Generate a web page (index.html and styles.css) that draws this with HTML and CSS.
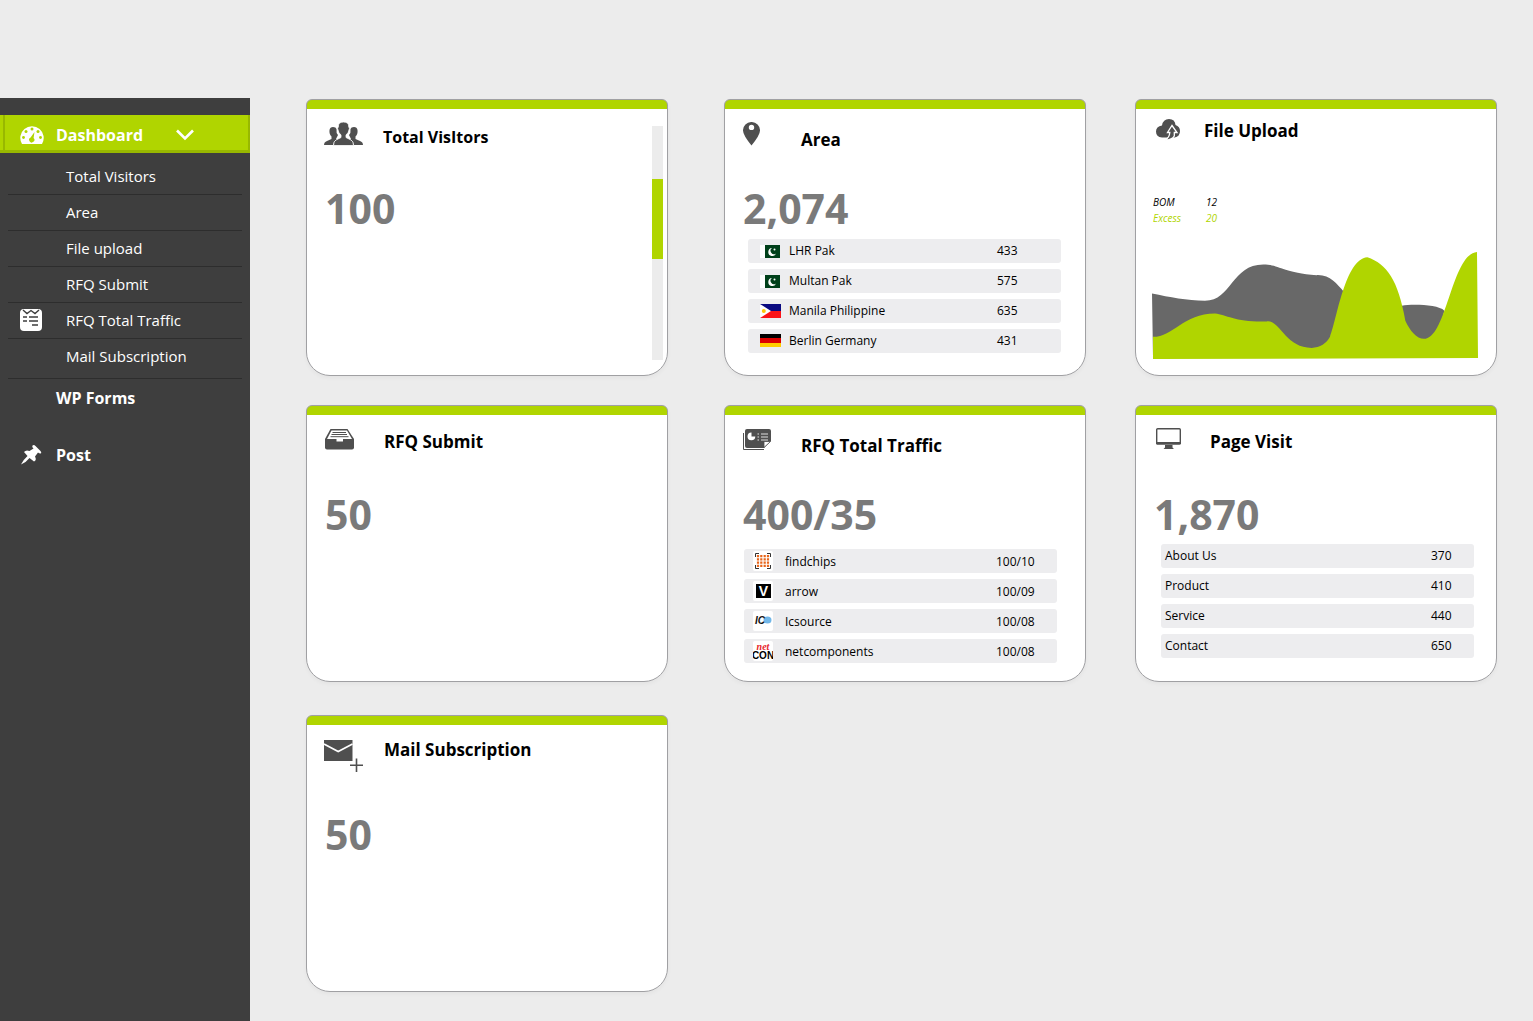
FILE: index.html
```html
<!DOCTYPE html>
<html lang="en">
<head>
<meta charset="utf-8">
<meta name="viewport" content="width=device-width, initial-scale=1">
<title>Dashboard</title>
<link rel="stylesheet" href="styles.css">
</head>
<body>
<div class="layout">
  <nav class="sidebar" aria-label="Main menu">
    <a class="nav-main nav-main--active" href="#dashboard">
      <svg class="nav-icon" width="24" height="20" viewBox="0 0 24 20" aria-hidden="true">
        <path fill="#fff" d="M2 19A11.700 11.700 0 1 1 22 19Z"/>
        <g fill="#b0d500"><circle cx="3.500" cy="12.500" r="1.400"/><circle cx="6" cy="6.500" r="1.500"/><circle cx="12" cy="4" r="1.500"/><circle cx="18" cy="6.500" r="1.500"/><circle cx="20.500" cy="12.500" r="1.400"/><path d="M14.500 7L13.600 13A2.600 2.600 0 1 1 10.600 12.500Z"/></g>
      </svg>
      <span class="nav-label">Dashboard</span>
      <svg class="nav-chevron" width="18" height="12" viewBox="0 0 18 12" aria-hidden="true"><path d="M1 1.500L9 9.500L17 1.500" fill="none" stroke="#fff" stroke-width="2.600"/></svg>
    </a>
    <ul class="submenu">
      <li><a href="#visitors">Total Visitors</a></li>
      <li><a href="#area">Area</a></li>
      <li><a href="#upload">File upload</a></li>
      <li><a href="#submit">RFQ Submit</a></li>
      <li class="submenu-marked">
        <svg width="22" height="22" viewBox="0 0 22 22" aria-hidden="true">
          <rect width="22" height="22" rx="4" fill="#fff"/>
          <path d="M3 1L7 4.500L11 1.500L15 4.500L19 1M3 8H7M9 8H18M3 12H7M9 12H18M12 16H18" fill="none" stroke="#3e3e3e" stroke-width="1.400"/>
        </svg>
        <a href="#traffic">RFQ Total Traffic</a>
      </li>
      <li><a href="#mail">Mail Subscription</a></li>
    </ul>
    <a class="nav-main" href="#forms"><span class="nav-label">WP Forms</span></a>
    <a class="nav-main nav-main--post" href="#post">
      <svg class="nav-icon" width="24" height="22" viewBox="0 0 24 22" aria-hidden="true">
        <path fill="#fff" d="M12.500 1.500Q14 .5 15.500 2L20.500 7Q22 9 20.500 9.500Q19 9.500 18 8.500L15 12.500Q17 16 14 17.500L9.500 14Q6 18.500 1 20.500Q3 16 7.500 12L4 8Q6 5.500 9.500 7L13.500 4.500Q11.500 3 12.500 1.500Z"/>
      </svg>
      <span class="nav-label">Post</span>
    </a>
  </nav>

  <main class="cards">
    <section class="card card--first card--scroll" id="visitors">
      <div>
        <header class="card-head card-head--small">
          <svg width="39" height="24" viewBox="0 0 39 24" fill="#4f4f4f" aria-hidden="true">
            <path d="M0 23Q0 20 3 19L7.500 17V14.500Q5 12 5.500 8Q6 5 9 5Q12 5 12.500 7Q12 11 14 13L12 17Q14 17.500 11.500 18.500Q9.500 20 9 23Z"/>
            <path d="M39 23Q39 20 36 19L31.500 17V14.500Q34 12 33.500 8Q33 5 30 5Q27 5 26.500 7Q27 11 25 13L27 17Q25 17.500 27.500 18.500Q29.500 20 30 23Z"/>
            <path stroke="#fff" stroke-width=".8" d="M9.500 23.500Q9.500 19 12 18L17 15.500V13Q14.500 11 14 8Q13 6 14.300 5Q14 0 19.500 0Q25 0 24.800 5Q26 6 25 8Q24.500 11 22 13V15.500L27 18Q29.500 19 29.500 23.500Z"/>
          </svg>
          <h2>Total VisItors</h2>
        </header>
        <p class="stat">100</p>
      </div>
      <div class="track"><div class="thumb"></div></div>
    </section>

    <section class="card card--middle" id="area">
      <header class="card-head card-head--low">
        <svg width="17" height="24" viewBox="0 0 17 24" aria-hidden="true"><path fill="#4f4f4f" fill-rule="evenodd" d="M8.500 0A8.300 8.300 0 0 1 17 8.500Q17 13 8.500 23.500Q0 13 0 8.500A8.300 8.300 0 0 1 8.500 0ZM8.500 2.700A2.700 2.700 0 1 0 8.500 8.100A2.700 2.700 0 1 0 8.500 2.700Z"/></svg>
        <h2>Area</h2>
      </header>
      <p class="stat">2,074</p>
      <ul class="rows rows--area">
        <li><svg width="21" height="14" viewBox="0 0 21 14" aria-hidden="true"><path fill="#fff" d="M0 1H5V14H0Z"/><path fill="#00401a" d="M5 1H20V14H5Z"/><path fill="#fff" d="M12 4A4 4 0 1 0 16 9.500A3.300 3.300 0 1 1 12 4Z"/><circle cx="14.500" cy="5.500" r="1" fill="#fff"/></svg><span>LHR Pak</span><b>433</b></li>
        <li><svg width="21" height="14" viewBox="0 0 21 14" aria-hidden="true"><path fill="#fff" d="M0 1H5V14H0Z"/><path fill="#00401a" d="M5 1H20V14H5Z"/><path fill="#fff" d="M12 4A4 4 0 1 0 16 9.500A3.300 3.300 0 1 1 12 4Z"/><circle cx="14.500" cy="5.500" r="1" fill="#fff"/></svg><span>Multan Pak</span><b>575</b></li>
        <li><svg width="21" height="14" viewBox="0 0 21 14" aria-hidden="true"><path fill="#0a0a80" d="M0 0H21V7H0Z"/><path fill="#fb1318" d="M0 7H21V14H0Z"/><path fill="#fff" d="M0 0L11 7L0 14Z"/><circle cx="3.800" cy="7" r="2" fill="#fcc80c"/></svg><span>Manila Philippine</span><b>635</b></li>
        <li><svg width="21" height="14" viewBox="0 0 21 14" aria-hidden="true"><path d="M0 0H21V5H0Z"/><path fill="#dd0000" d="M0 4H21V9H0Z"/><path fill="#ffce00" d="M0 9H21V13H0Z"/></svg><span>Berlin Germany</span><b>431</b></li>
      </ul>
    </section>

    <section class="card card--last" id="upload">
      <header class="card-head card-head--high">
        <svg width="25" height="22" viewBox="0 0 25 22" aria-hidden="true">
          <path fill="#4f4f4f" d="M6 18.500Q0 18 0 12.500Q0 7.500 6 6.500Q7 0 13 0Q19 0 19.500 6Q24 7.500 24 12Q24 17.500 18.500 18.500Z"/>
          <path fill="#4f4f4f" stroke="#fff" stroke-width="1.300" d="M16 6.500L21 13.500H18.300V17Q16.500 20.500 9 21.300Q13.500 18.500 13.800 13.500H11.500Z"/>
        </svg>
        <h2>File Upload</h2>
      </header>
      <dl class="legend">
        <dt>BOM</dt><dd>12</dd>
        <dt class="legend-excess">Excess</dt><dd class="legend-excess">20</dd>
      </dl>
      <svg class="chart" viewBox="66 485 978 319" preserveAspectRatio="none" role="img" aria-label="BOM and Excess uploads over time">
        <path fill="#686868" d="M66 609C120 620 170 630 225 630C305 630 305 522 400 522C450 522 450 545 560 554C600 552 620 580 642 604L640 790L69 800Z"/>
        <path fill="#686868" d="M815 645C850 640 925 642 943 660L920 780H830Z"/>
        <path fill="#b0d500" d="M69 738C130 738 160 668 255 668C290 672 320 695 410 692C450 686 465 771 545 771C570 771 590 757 600 738C620 690 645 505 712 501C770 520 805 570 826 690C840 720 860 744 882 744C950 744 965 490 1041 485L1044 801L69 804Z"/>
      </svg>
    </section>

    <section class="card card--first" id="submit">
      <header class="card-head">
        <svg width="30" height="22" viewBox="0 -1 30 22" aria-hidden="true">
          <path fill="#4f4f4f" d="M6.500 0H23.500L30 10V18.500Q30 20.500 28 20.500H3Q1 20.500 1 18.500V10Z"/>
          <path fill="#fff" d="M7.500 1.500H23L28 10H19V12.500H12.500V10H3Z"/>
          <path d="M8.500 3.500H22M7.500 5.500H23M6.500 7.700H24.500" stroke="#4f4f4f"/>
        </svg>
        <h2>RFQ Submit</h2>
      </header>
      <p class="stat">50</p>
    </section>

    <section class="card card--middle" id="traffic">
      <header class="card-head card-head--low">
        <svg width="28" height="23" viewBox="0 -1 28 23" aria-hidden="true">
          <path d="M.5 4V20.500H21" fill="none" stroke="#4f4f4f"/>
          <path fill="#4f4f4f" d="M4 0H26Q28 0 28 2V12L21 19H4Q2 19 2 17V2Q2 0 4 0Z"/>
          <path fill="#fff" stroke="#4f4f4f" stroke-width=".8" d="M21 18.500V12.500H27.500Z"/>
          <path fill="#fff" d="M8.500 3.500V7.500H12.300A3.900 3.900 0 1 1 8.500 3.500Z"/>
          <path d="M14.500 5H16M18 5H25M14.500 8H16M18 8H25M14.500 11H16M18 11H25" stroke="#ddd" stroke-width="1.200"/>
        </svg>
        <h2>RFQ Total Traffic</h2>
      </header>
      <p class="stat">400/35</p>
      <ul class="rows rows--traffic">
        <li><svg width="20" height="20" viewBox="0 0 20 20" aria-hidden="true"><rect width="20" height="20" rx="2" fill="#fff"/><path d="M2.500 6V2.500H6M14 2.500H17.500V6M17.500 14V17.500H14M6 17.500H2.500V14" fill="none" stroke="#333"/><path d="M5 4V16M8.300 4V16M11.700 4V16M15 4V16" stroke="#e8651a" stroke-width="2.200" stroke-dasharray="2.200 1.070"/></svg><span>findchips</span><b>100/10</b></li>
        <li><svg width="20" height="20" viewBox="0 0 20 20" aria-hidden="true"><rect width="20" height="20" rx="2" fill="#fff"/><path d="M3 3H18V17H3Z"/><text x="10.500" y="15" text-anchor="middle" class="logo-v">V</text></svg><span>arrow</span><b>100/09</b></li>
        <li><svg width="20" height="20" viewBox="0 0 20 20" aria-hidden="true"><rect width="20" height="20" rx="2" fill="#fff"/><ellipse cx="14.500" cy="9" rx="4" ry="3.500" fill="#72b7e8"/><text x="2" y="13" class="logo-ic">IC</text></svg><span>Icsource</span><b>100/08</b></li>
        <li><svg width="20" height="20" viewBox="0 0 20 20" aria-hidden="true"><rect width="20" height="20" rx="2" fill="#fff"/><text x="10" y="9" text-anchor="middle" class="logo-net">net</text><text x="10" y="18" text-anchor="middle" class="logo-con">CON</text></svg><span>netcomponents</span><b>100/08</b></li>
      </ul>
    </section>

    <section class="card card--last" id="pages">
      <header class="card-head card-head--wide">
        <svg width="25" height="22" viewBox="0 0 25 22" aria-hidden="true">
          <rect x=".7" y=".7" width="23.600" height="15" rx="1" fill="#fff" stroke="#4f4f4f" stroke-width="1.400"/>
          <path fill="#4f4f4f" d="M0 14H25V15.500Q25 16.500 24 16.500H1Q0 16.500 0 15.500ZM9 17H16.500V19.500L18 21H7.500L9 19.500Z"/>
        </svg>
        <h2>Page Visit</h2>
      </header>
      <p class="stat">1,870</p>
      <ul class="rows rows--pages">
        <li><span>About Us</span><b>370</b></li>
        <li><span>Product</span><b>410</b></li>
        <li><span>Service</span><b>440</b></li>
        <li><span>Contact</span><b>650</b></li>
      </ul>
    </section>

    <section class="card card--first card--mail" id="mail">
      <header class="card-head card-head--mail">
        <svg width="40" height="35" viewBox="0 -1 40 35" aria-hidden="true">
          <path fill="#4f4f4f" d="M0 1H28.500V22H0Z"/>
          <path d="M0 5L14.200 12.500L28.500 5" fill="none" stroke="#fff" stroke-width="1.600"/>
          <path d="M32.500 19.500V33M26 26.200H39" stroke="#4f4f4f" stroke-width="1.600"/>
        </svg>
        <h2>Mail Subscription</h2>
      </header>
      <p class="stat">50</p>
    </section>
  </main>
</div>
</body>
</html>
```
FILE: styles.css
```css
* { box-sizing: border-box; }

body {
  margin: 0;
  background: #ececec;
  color: #000;
  font-family: "Open Sans", "Noto Sans", sans-serif;
}

ul, dl, dd, p, h2 { margin: 0; padding: 0; }
ul { list-style: none; }
a { color: inherit; text-decoration: none; }
svg { display: block; flex: none; }

.layout {
  display: flex;
  min-height: 100vh;
  padding-top: 98px;
}

/* Sidebar */
.sidebar {
  flex: 0 0 250px;
  padding-top: 17px;
  background: #3e3e3e;
  color: #fff;
}

.nav-main {
  display: flex;
  align-items: center;
  height: 38px;
  padding-left: 56px;
  font-size: 16px;
  font-weight: 700;
}

.nav-main--active {
  padding: 5px 0 0 20px;
  margin-bottom: 6px;
  background: #b0d500;
  border-right: 2px solid #98b800;
  border-bottom: 3px solid #98b800;
  box-shadow: inset 3px 0 #b0d500, inset 5px 0 #98b800;
}

.nav-main--post {
  margin-top: 19px;
  padding-left: 20px;
}

.nav-icon { margin-right: 12px; }
.nav-chevron { margin-left: 33px; }

.submenu {
  margin: 0 8px;
  font-size: 15px;
}

.submenu li {
  display: flex;
  align-items: center;
  height: 36px;
  padding: 0 0 2px 58px;
  border-bottom: 1px solid #2d2d2d;
}

.submenu li:last-child {
  height: 40px;
  padding-bottom: 6px;
}

.submenu .submenu-marked {
  gap: 24px;
  padding-left: 12px;
}

/* Card grid */
.cards {
  flex: 1;
  display: grid;
  grid-template-columns: minmax(0, 369fr) minmax(0, 362fr) minmax(0, 362fr);
  align-content: start;
  gap: 29px 49px;
  padding: 1px 36px 29px 56px;
}

.card {
  min-height: 277px;
  padding: 22px 18px 0 17px;
  background: linear-gradient(#b0d500 9px, #fff 9px);
  border: 1px solid #a0a0a3;
  border-radius: 6px 6px 24px 24px;
  box-shadow: 0 2px 4px rgba(0, 0, 0, 0.04);
}

.card--first { margin-right: 7px; }
.card--last { padding-left: 20px; }
.card--mail { margin-top: 4px; }
.card--middle { padding-left: 18px; }

.card--scroll {
  display: flex;
  justify-content: space-between;
  padding-right: 4px;
}

.card-head {
  display: grid;
  grid-template-columns: 60px 1fr;
  align-items: start;
  height: 62px;
}

.card-head h2 {
  padding-top: 2px;
  font-size: 17px;
  font-weight: 700;
  line-height: 24px;
}

.card-head--small { grid-template-columns: 59px 1fr; }
.card-head--small h2 { padding-top: 3px; font-size: 16px; }
.card-head--low { grid-template-columns: 58px 1fr; }
.card-head--low h2 { padding-top: 6px; }
.card-head--high { grid-template-columns: 48px 1fr; margin-top: -3px; height: 64px; }
.card-head--high h2 { padding-top: 0; }
.card-head--wide { grid-template-columns: 54px 1fr; }
.card-head--mail { height: 72px; }
.card-head--mail h2 { padding-top: 0; }

.stat {
  color: #7a7a7a;
  font-size: 41px;
  font-weight: 700;
  line-height: 48px;
}

.card--first .stat { padding-left: 1px; }
.card--last .stat { margin-left: -2px; }

.track {
  width: 11px;
  height: 234px;
  margin-top: 4px;
  padding-top: 53px;
  background: #ececec;
}

.thumb {
  height: 80px;
  background: #b0d500;
}

/* Label and value rows */
.rows {
  display: grid;
  gap: 6px;
  font-size: 12px;
}

.rows li {
  display: flex;
  align-items: center;
  height: 24px;
  background: #ededef;
  border-radius: 3px;
}

.rows span { flex: 1; }
.rows b { font-weight: 400; }

.rows--area { margin: 7px 6px 0 5px; }
.rows--area li { gap: 8px; padding-left: 12px; }
.rows--area b { width: 56px; margin-right: 8px; }
.rows--area span, .rows--area b { padding-bottom: 2px; }

.rows--traffic { margin: 11px 10px 0 1px; }
.rows--traffic li { gap: 12px; padding-left: 9px; }
.rows--traffic b { width: 61px; }

.rows--pages { margin: 6px 4px 0 5px; }
.rows--pages li { padding: 0 0 2px 4px; }
.rows--pages b { width: 43px; }

.logo-v { fill: #fff; font: 700 14px "Liberation Sans", sans-serif; }
.logo-ic { fill: #111; font: italic 700 10px "Liberation Sans", sans-serif; }
.logo-net { fill: #e8252a; font: italic 700 10px "Liberation Serif", serif; }
.logo-con { fill: #000; font: 700 10px "Liberation Sans Narrow", "Liberation Sans", sans-serif; }

/* Upload chart */
.legend {
  display: grid;
  grid-template-columns: 53px 1fr;
  padding: 11px 0 0;
  margin-left: -3px;
  font-size: 10px;
  font-style: italic;
  line-height: 16px;
}

.legend-excess { color: #b0d500; }

.chart {
  width: calc(100% + 4px);
  height: 107px;
  margin: 26px 0 0 -4px;
}
```
